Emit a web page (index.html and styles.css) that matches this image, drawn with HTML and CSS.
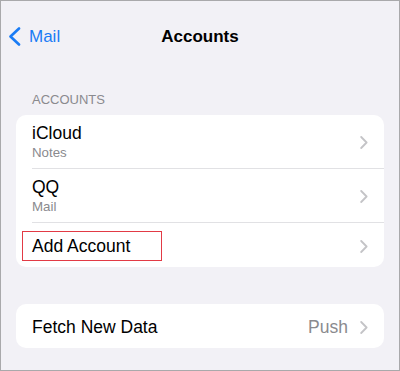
FILE: index.html
```html
<!DOCTYPE html>
<html>
<head>
<meta charset="utf-8">
<link rel="stylesheet" href="styles.css">
</head>
<body>
<div class="screen">
  <header class="nav">
    <div class="back">
      <svg class="back-icon" width="13" height="19" viewBox="0 0 13 19"><path d="M11 1.5 L2.5 9.5 L11 17.5" fill="none" stroke="#1a7cf5" stroke-width="2.6" stroke-linecap="round" stroke-linejoin="round"/></svg>
      <span>Mail</span>
    </div>
    <div class="title">Accounts</div>
    <div></div>
  </header>

  <div class="section-label">ACCOUNTS</div>
  <div class="card">
    <div class="row two">
      <div class="texts">
        <div class="main">iCloud</div>
        <div class="sub">Notes</div>
      </div>
      <svg class="chev" width="8" height="13" viewBox="0 0 8 13"><path d="M1.2 1 L6.6 6.5 L1.2 12" fill="none" stroke="#c4c4c7" stroke-width="1.8" stroke-linecap="round" stroke-linejoin="round"/></svg>
    </div>
    <div class="row two">
      <div class="texts">
        <div class="main">QQ</div>
        <div class="sub">Mail</div>
      </div>
      <svg class="chev" width="8" height="13" viewBox="0 0 8 13"><path d="M1.2 1 L6.6 6.5 L1.2 12" fill="none" stroke="#c4c4c7" stroke-width="1.8" stroke-linecap="round" stroke-linejoin="round"/></svg>
    </div>
    <div class="row add">
      <div class="highlight"><span class="main">Add Account</span></div>
      <svg class="chev" width="8" height="13" viewBox="0 0 8 13"><path d="M1.2 1 L6.6 6.5 L1.2 12" fill="none" stroke="#c4c4c7" stroke-width="1.8" stroke-linecap="round" stroke-linejoin="round"/></svg>
    </div>
  </div>

  <div class="card second">
    <div class="row single">
      <div class="main">Fetch New Data</div>
      <div class="right">
        <span class="value">Push</span>
        <svg class="chev" width="8" height="13" viewBox="0 0 8 13"><path d="M1.2 1 L6.6 6.5 L1.2 12" fill="none" stroke="#c4c4c7" stroke-width="1.8" stroke-linecap="round" stroke-linejoin="round"/></svg>
      </div>
    </div>
  </div>
</div>
</body>
</html>
```

FILE: styles.css
```css
* { box-sizing: border-box; }
html, body {
  margin: 0;
  padding: 0;
}
body {
  font-family: "Liberation Sans", Arial, sans-serif;
  color: #000;
}
.screen {
  width: 400px;
  height: 371px;
  border: 1px solid #a9a9ab;
  background: #f2f1f6;
  overflow: hidden;
}
.nav {
  display: grid;
  grid-template-columns: 1fr auto 1fr;
  align-items: center;
  padding: 24px 0 0 7px;
  height: 47px;
}
.back {
  display: flex;
  align-items: center;
  gap: 8px;
  color: #1a7cf5;
  font-size: 17px;
  line-height: 22px;
}
.back-icon { display: block; }
.title {
  font-size: 17px;
  line-height: 22px;
  font-weight: bold;
  text-align: center;
  margin-left: -7px;
}
.section-label {
  margin: 44px 0 0 31px;
  font-size: 13px;
  line-height: 16px;
  color: #8a8a8e;
}
.card {
  margin: 7px 15px 0 15px;
  background: #fff;
  border-radius: 10px;
  overflow: hidden;
}
.card.second { margin-top: 37px; }
.row {
  display: flex;
  align-items: center;
  justify-content: space-between;
  margin-left: 16px;
  padding-right: 16px;
}
.row.two {
  padding-top: 7px;
  padding-bottom: 6px;
  border-bottom: 1px solid #e1e1e4;
}
.main {
  font-size: 17.5px;
  line-height: 22px;
}
.sub {
  font-size: 13.3px;
  line-height: 18px;
  color: #8a8a8e;
}
.row.add {
  padding-top: 8px;
  padding-bottom: 6px;
}
.highlight {
  width: 140px;
  height: 30px;
  margin-left: -10px;
  border: 1px solid #e23a45;
  padding: 3px 0 0 9px;
}
.row.single {
  padding-top: 12px;
  padding-bottom: 10px;
}
.right {
  display: flex;
  align-items: center;
  gap: 12px;
}
.value {
  font-size: 17.5px;
  line-height: 22px;
  color: #8a8a8e;
}
.chev { display: block; }
```
